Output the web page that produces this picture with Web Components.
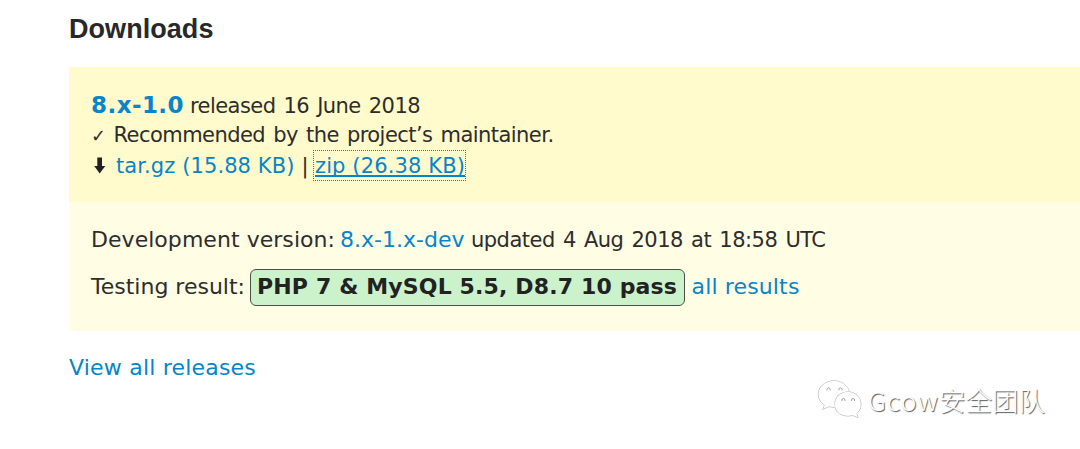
<!DOCTYPE html>
<html lang="en">
<head>
<meta charset="utf-8">
<title>Downloads</title>
<style>
html,body{margin:0;background:#fff}
body{width:1080px;height:449px;overflow:hidden;position:relative;font:21px/30px "DejaVu Sans",sans-serif;color:#2d2d2b}
</style>
</head>
<body>
<downloads-page></downloads-page>
<script>
const attach=(el,html)=>{const t=document.createElement('template');t.innerHTML=html;el.attachShadow({mode:'open'}).append(t.content.cloneNode(true));};

/* A piece of text whose tracking is set so that it fills the given measure. */
customElements.define('text-run',class extends HTMLElement{
  connectedCallback(){
    if(this.shadowRoot)return;
    attach(this,`<style>:host{display:block;flex:none;white-space:pre}
      :host([link]){color:#0784ca}
      :host([strong]){font-weight:bold}
      :host([large]){font-size:22px}
      :host([underlined]) span{text-decoration:underline;text-decoration-thickness:1.500px;text-underline-offset:2px;text-decoration-skip-ink:none}
      span{display:inline-block}</style><span><slot></slot></span>`);
    const w=parseFloat(this.getAttribute('measure'));
    if(!w)return;
    this.style.width=w+'px';
    const s=this.shadowRoot.querySelector('span');
    s.style.letterSpacing=((w-s.getBoundingClientRect().width)/[...this.textContent].length)+'px';
  }
});

customElements.define('release-row',class extends HTMLElement{
  constructor(){super();attach(this,`<style>:host{display:flex;align-items:baseline;height:30px;line-height:30px}</style><slot></slot>`);}
});

customElements.define('release-panel',class extends HTMLElement{
  constructor(){super();attach(this,`<style>:host{display:block;box-sizing:border-box;background:#fffee5;padding:23px 0 0 22px;height:129px}
    :host([recommended]){background:#fffbcd;height:135px}</style><slot></slot>`);}
});

customElements.define('test-badge',class extends HTMLElement{
  constructor(){super();attach(this,`<style>:host{display:block;box-sizing:border-box;width:435px;height:37px;line-height:33px;padding:0 6px;border:1.5px solid #4b504a;border-radius:6px;background:#ccf2cc;color:#222;font-weight:bold}</style><slot></slot>`);}
});

customElements.define('channel-mark',class extends HTMLElement{
  constructor(){super();attach(this,`<style>
    :host{position:absolute;left:817px;top:379px;display:flex;align-items:center;height:42px;color:#fff;font:26.4px/42px "Noto Sans CJK SC",sans-serif;font-weight:300;text-shadow:1px 1px 1px #555}
    svg{display:block;width:46px;height:42px;margin-right:5px;filter:drop-shadow(.8px .8px .6px #666)}
    </style>
    <svg viewBox="0 0 46 42" fill="#fff" stroke="#e6e6e6" stroke-width=".4">
      <path d="M17 1.800C8.300 1.800 1.300 7.800 1.300 15.300c0 4.500 2.300 8.200 6.200 10.800L5.800 30.300l6-2.700c1.800.5 3.500.8 5.400.8h1.200C15.500 19.500 22 12.500 32.300 12.500 30.500 6.500 24.500 1.800 17 1.800Z"/>
      <path d="M44 25.500c0-7-5.500-12.700-13-12.700S17.800 18.500 17.800 25.500 23.500 37 31 37c1.500 0 3-.2 4.500-.7l5.500 2.400-1.400-4.300c3-2.400 4.400-5.400 4.400-8.900Z"/>
      <g fill="none" stroke="#999" stroke-width=".9"><path d="M10 11.500v-1a1.600 1.600 0 0 1 3.200 0v1M21.800 11.500v-1a1.600 1.600 0 0 1 3.200 0v1M25 22v-1a1.500 1.500 0 0 1 3 0v1M34.500 22v-1a1.500 1.500 0 0 1 3 0v1"/></g>
    </svg><slot></slot>`);}
});

customElements.define('downloads-page',class extends HTMLElement{
  constructor(){super();attach(this,`<style>
    :host{display:block;padding-left:69px}
    h2{margin:0;padding-top:14px;height:53px;font:bold 27px/30px "Liberation Sans",sans-serif;color:#28282a}
    .version{font-size:23px}
    .spaced{word-spacing:2px}
    .icon{display:block;flex:none;align-self:center}
    .focus{box-sizing:border-box;width:153px;height:31px;line-height:30px;padding-left:1px;border:1px dotted #0784ca;color:#0784ca}
    </style>
    <h2><text-run measure="144.500">Downloads</text-run></h2>
    <release-panel recommended>
      <release-row><text-run class="version" link strong measure="93">8.x-1.0</text-run><text-run class="spaced" style="margin-left:6px" measure="230">released 16 June 2018</text-run></release-row>
      <release-row><text-run style="width:22.500px;font-size:18px">✓</text-run><text-run class="spaced" measure="440">Recommended by the project’s maintainer.</text-run></release-row>
      <release-row><svg class="icon" width="25" height="20" viewBox="0 0 25 20"><path d="M6.300 2.500h4.700v8.500h3.300L8.700 18.500l-5.500-7.500h3.100Z" fill="#222"/></svg><text-run link measure="178.500">tar.gz (15.88 KB)</text-run><text-run style="margin-left:7px;width:11.500px">|</text-run><div class="focus"><text-run underlined measure="150">zip (26.38 KB)</text-run></div></release-row>
    </release-panel>
    <release-panel>
      <release-row><text-run large measure="244">Development version:</text-run><text-run style="margin-left:5px" large link measure="124.500">8.x-1.x-dev</text-run><text-run class="spaced" style="margin-left:6.500px" measure="354.500">updated 4 Aug 2018 at 18:58 UTC</text-run></release-row>
      <release-row style="margin-top:14px"><text-run large measure="154">Testing result:</text-run><test-badge style="margin-left:5px"><text-run large measure="420">PHP 7 &amp; MySQL 5.5, D8.7 10 pass</text-run></test-badge><text-run style="margin-left:6.500px" large link measure="108">all results</text-run></release-row>
    </release-panel>
    <text-run style="margin-top:22px" large link measure="187">View all releases</text-run>
    <channel-mark><text-run measure="71">Gcow</text-run><text-run measure="106">安全团队</text-run></channel-mark>`);}
});
</script>
</body>
</html>
